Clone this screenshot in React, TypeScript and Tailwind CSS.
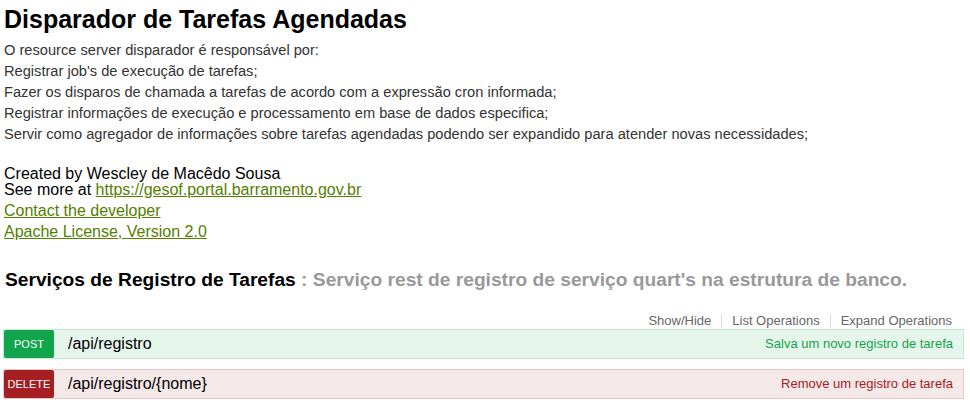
import React from "react";

interface Operation {
  method: string;
  path: string;
  summary: string;
  badge: string;
  row: string;
  text: string;
}

const operations: Operation[] = [
  {
    method: "POST",
    path: "/api/registro",
    summary: "Salva um novo registro de tarefa",
    badge: "bg-[#10a54a]",
    row: "bg-[#e7f6ec] border-[#c3e8d1]",
    text: "text-[#10a54a]",
  },
  {
    method: "DELETE",
    path: "/api/registro/{nome}",
    summary: "Remove um registro de tarefa",
    badge: "bg-[#a41e22]",
    row: "bg-[#f5e8e8] border-[#e8c6c7]",
    text: "text-[#a41e22]",
  },
];

const description = [
  "O resource server disparador é responsável por:",
  "Registrar job's de execução de tarefas;",
  "Fazer os disparos de chamada a tarefas de acordo com a expressão cron informada;",
  "Registrar informações de execução e processamento em base de dados especifica;",
  "Servir como agregador de informações sobre tarefas agendadas podendo ser expandido para atender novas necessidades;",
];

const App: React.FC = () => {
  return (
    <div className="w-[970px] h-[410px] bg-white overflow-hidden font-['Liberation_Sans',Arial,sans-serif] text-black">
      <div className="pl-[4px] pr-[6px] pt-[7px]">
        <div className="text-[25px] font-bold leading-[25px]">
          Disparador de Tarefas Agendadas
        </div>
        <div className="mt-[8px] text-[14.65px] leading-[21px] text-[#333]">
          {description.map((line) => (
            <div key={line}>{line}</div>
          ))}
        </div>
        <div className="mt-[21px] text-[16px] leading-[16px]">
          <div>Created by Wescley de Macêdo Sousa</div>
          <div>
            See more at{" "}
            <a href="#" className="text-[#547f00] underline">
              https://gesof.portal.barramento.gov.br
            </a>
          </div>
        </div>
        <div className="mt-[2px] text-[16px] leading-[21px] text-[#547f00] underline">
          <div>
            <a href="#">Contact the developer</a>
          </div>
          <div>
            <a href="#">Apache License, Version 2.0</a>
          </div>
        </div>

        <div className="mt-[27px] flex items-baseline text-[19.2px] font-bold leading-[22px]">
          <span className="pl-[1px] text-black">Serviços de Registro de Tarefas</span>
          <span className="text-[#999]">&nbsp;: Serviço rest de registro de serviço quart's na estrutura de banco.</span>
        </div>

        <div className="mt-[23px] flex justify-end text-[13px] leading-[14px] text-[#666] pr-[12px]">
          <span className="pr-[10px]">Show/Hide</span>
          <span className="px-[10px] border-l border-[#ddd]">List Operations</span>
          <span className="pl-[10px] border-l border-[#ddd]">Expand Operations</span>
        </div>

        <div className="mt-[1px] ml-[-1px] flex flex-col gap-[10px]">
          {operations.map((op) => (
            <div
              key={op.method}
              className={`flex items-stretch h-[30px] border ${op.row}`}
            >
              <span
                className={`w-[50px] flex items-center justify-center rounded-[2px] text-white text-[11px] ${op.badge}`}
              >
                {op.method}
              </span>
              <span className="ml-[14px] flex items-center text-[16px]">{op.path}</span>
              <span className={`ml-auto pr-[10px] flex items-center text-[13px] ${op.text}`}>
                {op.summary}
              </span>
            </div>
          ))}
        </div>
      </div>
    </div>
  );
};

export default App;
